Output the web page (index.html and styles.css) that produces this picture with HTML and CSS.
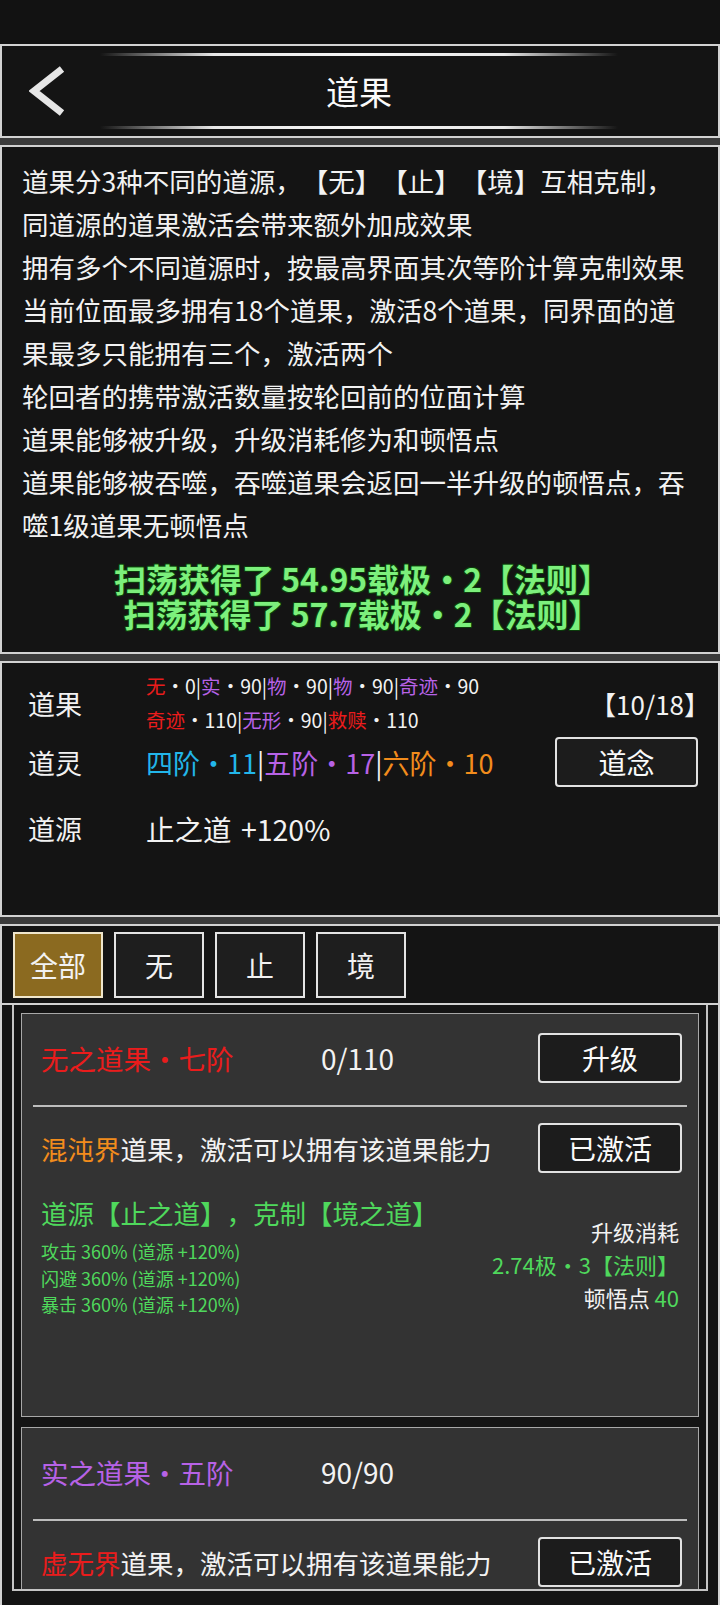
FILE: index.html
```
<!doctype html>
<html lang="zh">
  <head>
    <meta charset="utf-8">
    <meta name="viewport" content="width=device-width, initial-scale=1">
    <title>道果</title>
    <link rel="stylesheet" href="styles.css">
  </head>
  <body>
    <div class="statusbar"></div>
    <div class="screen">
      <header class="panel topbar">
        <div class="back">
          <svg width="40" height="50" viewBox="0 0 40 50">
            <polyline points="33,3 5,25 33,47" fill="none" stroke="#e6e6e6" stroke-width="7"/>
          </svg>
        </div>
        <div class="title-wrap">
          <div class="deco"></div>
          <h1 class="title">道果</h1>
          <div class="deco"></div>
        </div>
        <div class="back-spacer"></div>
      </header>

      <section class="panel rules">
        <p>道果分3种不同的道源，【无】【止】【境】互相克制，</p>
        <p>同道源的道果激活会带来额外加成效果</p>
        <p>拥有多个不同道源时，按最高界面其次等阶计算克制效果</p>
        <p>当前位面最多拥有18个道果，激活8个道果，同界面的道<br>果最多只能拥有三个，激活两个</p>
        <p>轮回者的携带激活数量按轮回前的位面计算</p>
        <p>道果能够被升级，升级消耗修为和顿悟点</p>
        <p>道果能够被吞噬，吞噬道果会返回一半升级的顿悟点，吞<br>噬1级道果无顿悟点</p>
        <div class="reward">
          <div>扫荡获得了 54.95载极·2【法则】</div>
          <div>扫荡获得了 57.7载极·2【法则】</div>
        </div>
      </section>

      <section class="panel stats">
        <div class="stat-row first">
          <div class="stat-label">道果</div>
          <div class="tags">
            <div><span class="red">无</span>·0|<span class="purple">实</span>·90|<span class="purple">物</span>·90|<span class="purple">物</span>·90|<span class="purple">奇迹</span>·90</div>
            <div><span class="red">奇迹</span>·110|<span class="purple">无形</span>·90|<span class="red">救赎</span>·110</div>
          </div>
          <div class="count">【10/18】</div>
        </div>
        <div class="stat-row">
          <div class="stat-label">道灵</div>
          <div class="stat-value"><span class="cyan">四阶·11</span>|<span class="purple">五阶·17</span>|<span class="orange">六阶·10</span></div>
          <div class="btn btn-small">道念</div>
        </div>
        <div class="stat-row last">
          <div class="stat-label">道源</div>
          <div class="stat-value">止之道 +120%</div>
        </div>
      </section>

      <section class="panel list-panel">
        <div class="tabs">
          <div class="tab active">全部</div>
          <div class="tab">无</div>
          <div class="tab">止</div>
          <div class="tab">境</div>
        </div>
        <div class="list">
          <div class="card">
            <div class="card-head">
              <div class="card-name red">无之道果·七阶</div>
              <div class="card-progress">0/110</div>
              <div class="btn">升级</div>
            </div>
            <div class="divider"></div>
            <div class="card-row">
              <div class="card-desc"><span class="orange">混沌界</span>道果，激活可以拥有该道果能力</div>
              <div class="btn">已激活</div>
            </div>
            <div class="card-info">
              <div class="effects">
                <div class="effect-title">道源【止之道】，克制【境之道】</div>
                <div class="effect">攻击 360% (道源 +120%)</div>
                <div class="effect">闪避 360% (道源 +120%)</div>
                <div class="effect">暴击 360% (道源 +120%)</div>
              </div>
              <div class="cost">
                <div>升级消耗</div>
                <div class="green">2.74极·3【法则】</div>
                <div>顿悟点 <span class="green">40</span></div>
              </div>
            </div>
          </div>
          <div class="card">
            <div class="card-head">
              <div class="card-name purple">实之道果·五阶</div>
              <div class="card-progress">90/90</div>
            </div>
            <div class="divider"></div>
            <div class="card-row">
              <div class="card-desc"><span class="red">虚无界</span>道果，激活可以拥有该道果能力</div>
              <div class="btn">已激活</div>
            </div>
          </div>
        </div>
      </section>
    </div>
  </body>
</html>
```

FILE: styles.css
```
body {
     margin: 0;
     width: 720px;
     background-color: #121212;
     font-family: "Noto Sans CJK SC", "Noto Sans", sans-serif;
     color: #f2f2f2;
}
.statusbar {
     height: 44px;
     background-color: #121212;
}
.screen {
     display: flex;
     flex-direction: column;
     gap: 7px;
     background-color: #3b3b3b;
}
.panel {
     box-sizing: border-box;
     border: 2px solid #d2d2d2;
     background-color: #141414;
}

/* top bar */
.topbar {
     height: 94px;
     display: flex;
}
.back {
     width: 98px;
     display: flex;
     align-items: center;
     padding-left: 27px;
     box-sizing: border-box;
}
.back-spacer {
     width: 100px;
}
.title-wrap {
     flex: 1;
     display: flex;
     flex-direction: column;
     padding: 7px 0;
}
.deco {
     height: 3px;
     background: linear-gradient(to right, rgba(255,255,255,0), #e8e8e8 22%, #f6f6f6 50%, #e8e8e8 78%, rgba(255,255,255,0));
}
.title {
     flex: 1;
     margin: 0;
     display: flex;
     align-items: center;
     justify-content: center;
     font-size: 33px;
     font-weight: 400;
     color: #fafafa;
}

/* rules text */
.rules {
     height: 509px;
     padding: 12px 16px 0 20px;
}
.rules p {
     margin: 0;
     font-size: 26.5px;
     line-height: 43px;
     white-space: nowrap;
     text-spacing-trim: space-all;
}
.reward {
     margin-top: 15px;
     text-align: center;
     font-size: 32px;
     font-weight: 700;
     line-height: 35px;
     color: #7cf07c;
     text-shadow: 1px 1px 0 #0b3d0b, -1px -1px 0 #0b3d0b, 1px -1px 0 #0b3d0b, -1px 1px 0 #0b3d0b;
}

/* stats */
.stats {
     height: 256px;
     padding: 6px 20px 0 26px;
}
.stat-row {
     display: flex;
     align-items: center;
}
.stat-row.first {
     height: 68px;
}
.stat-row.last {
     margin-top: 21px;
     height: 40px;
}
.stat-label {
     width: 118px;
     font-size: 27px;
}
.tags {
     flex: 1;
     font-size: 19.5px;
     line-height: 34px;
}
.count {
     font-size: 26px;
     margin-right: -12px;
}
.stat-value {
     flex: 1;
     font-size: 27px;
}
.stat-row.last .stat-value {
     font-size: 28.5px;
     word-spacing: 3px;
}

/* colours */
.red { color: #ea1c1c; }
.purple { color: #b762e6; }
.cyan { color: #22b6ea; }
.orange { color: #f28c1c; }
.green { color: #4fd85c; }

/* buttons */
.btn {
     width: 144px;
     height: 50px;
     box-sizing: border-box;
     border: 2px solid #e2e2e2;
     border-radius: 4px;
     background-color: #1c1c1c;
     color: #fafafa;
     font-size: 28px;
     display: flex;
     align-items: center;
     justify-content: center;
     flex-shrink: 0;
}
.btn-small {
     width: 143px;
}

/* tabs + list */
.list-panel {
     height: 681px;
     overflow: hidden;
     border-bottom: none;
}
.tabs {
     display: flex;
     gap: 11px;
     padding: 6px 0 5px 11px;
     border-bottom: 2px solid #d2d2d2;
}
.tab {
     width: 90px;
     height: 66px;
     box-sizing: border-box;
     border: 2px solid #e4e4e4;
     background-color: #1e1e1e;
     font-size: 28px;
     display: flex;
     align-items: center;
     justify-content: center;
}
.tab.active {
     background-color: #8b6a20;
     border-color: #efe6cc;
}
.list {
     margin: 0 10px;
     height: 586px;
     box-sizing: border-box;
     border: 2px solid #c4c4c4;
     border-top: none;
     padding: 8px 7px 0 7px;
     overflow: hidden;
}
.card {
     height: 404px;
     box-sizing: border-box;
     border: 1px solid #a8a8a8;
     background-color: #333333;
}
.card + .card {
     margin-top: 10px;
}
.card-head {
     display: flex;
     align-items: center;
     min-height: 50px;
     padding: 19px 16px 22px 19px;
}
.card-name {
     width: 280px;
     font-size: 27.5px;
}
.card-progress {
     flex: 1;
     font-size: 28px;
}
.divider {
     height: 2px;
     margin: 0 11px;
     background-color: #bdbdbd;
}
.card-row {
     display: flex;
     align-items: center;
     justify-content: space-between;
     padding: 16px 16px 0 19px;
}
.card-desc {
     font-size: 26.5px;
}
.card-info {
     display: flex;
     justify-content: space-between;
     align-items: flex-start;
     padding: 22px 19px 0 19px;
}
.effect-title {
     font-size: 26.5px;
     line-height: 36px;
     color: #4fd85c;
     margin-bottom: 7px;
     text-spacing-trim: space-all;
}
.effect {
     font-size: 18px;
     line-height: 26.5px;
     color: #4fd85c;
}
.cost {
     margin-top: 20px;
     text-align: right;
     font-size: 22px;
     line-height: 33px;
}
```
